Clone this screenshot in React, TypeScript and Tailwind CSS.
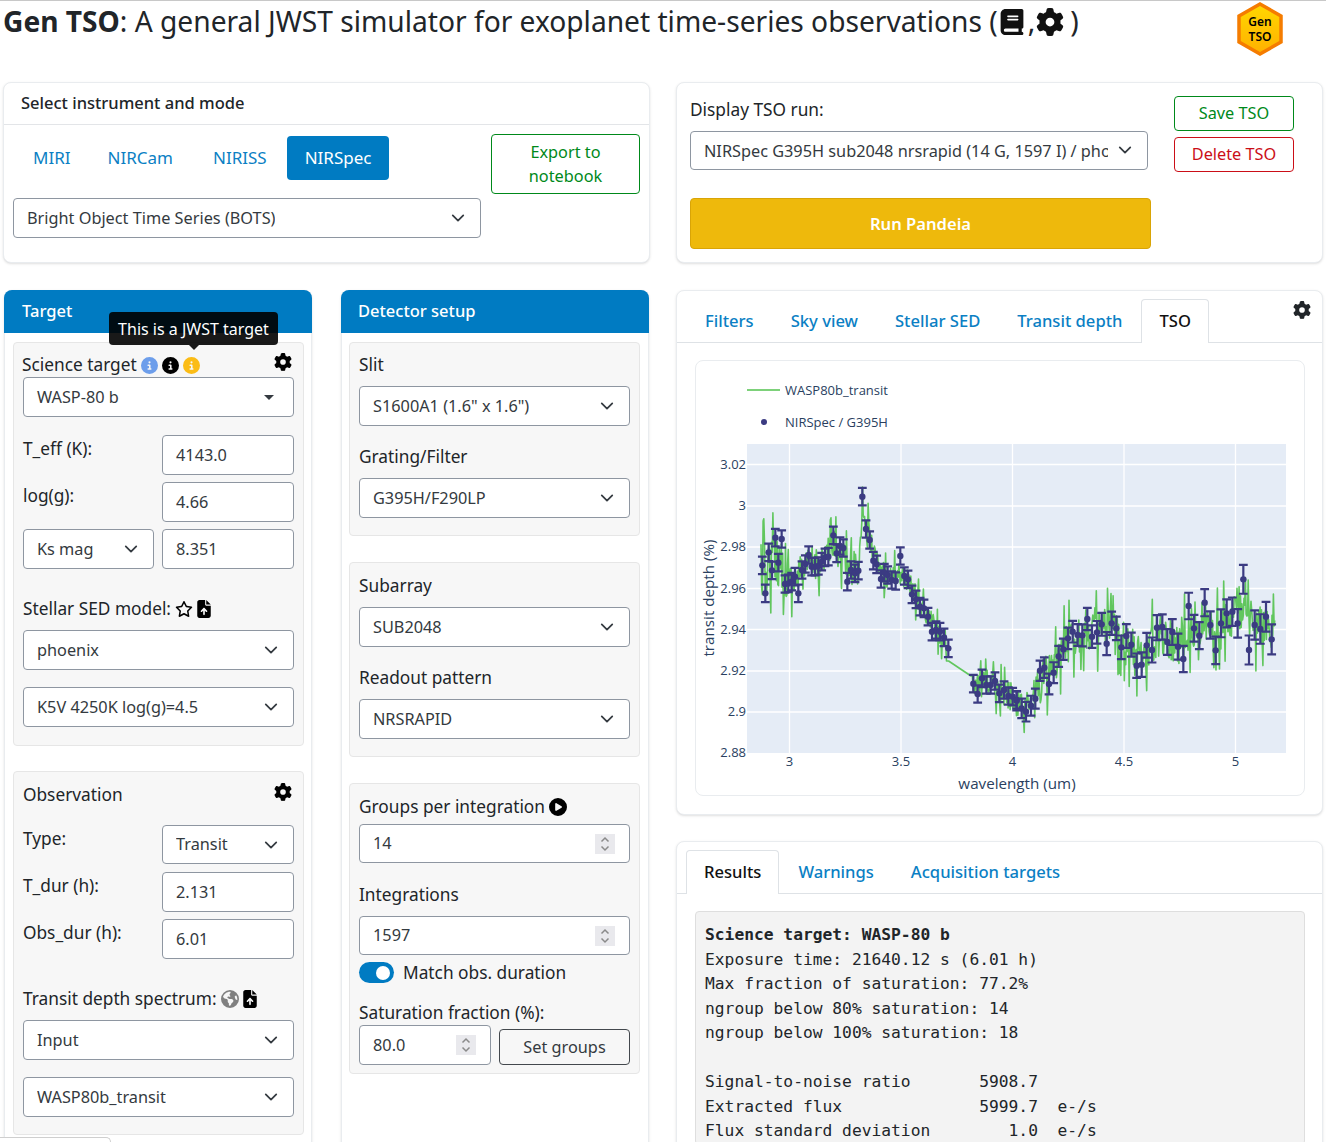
import type { ReactNode } from 'react';
import {
  FaBook,
  FaCircleInfo,
  FaCirclePlay,
  FaEarthAmericas,
  FaFileArrowUp,
  FaGear,
  FaRegStar,
} from 'react-icons/fa6';

const leftRaw = [
  [67, 376], [76, 460], [86, 337], [96, 391], [106, 293], [115, 368], [125, 297], [135, 432], [145, 430],
  [155, 425], [165, 410], [175, 460], [186, 390], [196, 372], [206, 345], [215, 380], [225, 380], [235, 378],
  [245, 365], [255, 352], [265, 350], [280, 286], [290, 340], [300, 318], [310, 324], [322, 425], [333, 390],
  [345, 400], [355, 392], [367, 170], [378, 267], [389, 300], [400, 362], [410, 373], [423, 417], [433, 398],
  [443, 405], [455, 420], [467, 423], [481, 348], [493, 408], [504, 418], [516, 463], [528, 478], [540, 500],
  [552, 505], [564, 530], [576, 575], [588, 570], [600, 575], [612, 592], [625, 625], [700, 731], [713, 762],
  [726, 715], [739, 735], [752, 735], [765, 723], [778, 760], [792, 750], [805, 768], [818, 770], [830, 780],
];
const rightRaw = [
  [20, 512], [35, 535], [48, 545], [63, 527], [76, 506], [90, 422], [103, 413], [117, 462], [131, 428], [146, 379],
  [160, 358], [174, 325], [188, 305], [203, 315], [217, 316], [232, 267], [246, 320], [261, 307], [275, 283],
  [290, 341], [305, 280], [319, 295], [334, 352], [349, 318], [364, 344], [380, 407], [395, 404], [410, 346],
  [426, 360], [441, 293], [457, 291], [472, 336], [487, 306], [504, 350], [520, 387], [536, 228], [552, 295],
  [568, 317], [584, 218], [601, 285], [617, 361], [633, 280], [650, 250], [667, 245], [683, 280], [700, 148],
  [717, 360], [734, 285], [751, 297], [768, 260], [785, 328],
];

const points = [
  ...leftRaw.map(([x, y]) => ({ x: 740 + x / 3, y: 440 + y / 3, e: 8.7 })),
  ...rightRaw.map(([x, y]) => ({ x: 1010 + x / 3, y: 530 + y / 3, e: 9.5 + (x / 785) * 5.5 })),
];

function noisePath() {
  let seed = 12345;
  const rand = () => {
    seed = (seed * 16807) % 2147483647;
    return seed / 2147483647;
  };
  const baseAt = (x: number) => {
    let i = 0;
    while (i < points.length - 2 && points[i + 1].x < x) i++;
    const a = points[i];
    const b = points[i + 1];
    const t = Math.max(0, Math.min(1, (x - a.x) / (b.x - a.x)));
    return a.y + (b.y - a.y) * t;
  };
  const smooth = (x: number) => {
    if (x > 856 && x < 868) return baseAt(x);
    return (baseAt(x - 7) + baseAt(x - 3.5) + baseAt(x) + baseAt(x + 3.5) + baseAt(x + 7)) / 5;
  };
  let d = '';
  for (let x = 761; x < 1275; x += 0.7) {
    if (x > 949 && x < 971) continue;
    let amp = 16;
    if (x < 790) amp = 30;
    else if (x < 870) amp = 20;
    else if (x < 949) amp = 14;
    else if (x < 1040) amp = 16;
    else amp = 25;
    const r = rand() - 0.5;
    const tail = Math.abs(r) > 0.45 ? 1.7 : 1;
    let y = smooth(x) + r * 2 * amp * tail;
    if (x > 946 && x <= 949) y = 661;
    if (x >= 971 && x < 973) y = 676;
    d += `${d ? 'L' : 'M'}${x.toFixed(1)} ${y.toFixed(1)}`;
  }
  return d;
}

const green = noisePath();
const xTicks: [number, string][] = [[789.5, '3'], [901, '3.5'], [1012.5, '4'], [1124, '4.5'], [1235.5, '5']];
const yTicks: [number, string][] = [
  [464.5, '3.02'], [506, '3'], [547, '2.98'], [588.5, '2.96'], [629.5, '2.94'], [671, '2.92'], [712, '2.9'], [753, '2.88'],
];

function Chart() {
  const axisText = 'fill-[#2a3f5f] text-[13px] font-["Open_Sans",sans-serif]';
  const titleText = 'fill-[#2a3f5f] text-[15.2px] font-["Open_Sans",sans-serif]';
  return (
    <svg className="block h-[434px] w-[608px]" viewBox="696 361 608 434">
      <rect x="747" y="444" width="539" height="309" fill="#e5ecf6" />
      {xTicks.map(([x]) => (
        <line key={x} x1={x} x2={x} y1="444" y2="753" stroke="#fff" strokeWidth="1.3" />
      ))}
      {yTicks.slice(0, -1).map(([y]) => (
        <line key={y} x1="747" x2="1286" y1={y} y2={y} stroke="#fff" strokeWidth="1.3" />
      ))}
      <path d={green} fill="none" stroke="#52c24e" strokeWidth="1.6" strokeOpacity="0.9" strokeLinejoin="round" />
      <g stroke="#3b3b82" strokeWidth="2.2" fill="#3b3b82">
        {points.map(p => (
          <g key={p.x}>
            <path
              d={`M${p.x} ${p.y - p.e}V${p.y + p.e}M${p.x - 4.4} ${p.y - p.e}h8.8M${p.x - 4.4} ${p.y + p.e}h8.8`}
              fill="none"
            />
            <circle cx={p.x} cy={p.y} r="3.2" stroke="none" />
          </g>
        ))}
      </g>
      {xTicks.map(([x, t]) => (
        <text key={t} x={x} y="766" textAnchor="middle" className={axisText}>{t}</text>
      ))}
      {yTicks.map(([y, t]) => (
        <text key={t} x="746" y={y + 4} textAnchor="end" className={axisText}>{t}</text>
      ))}
      <text x="1017" y="789" textAnchor="middle" className={titleText}>wavelength (um)</text>
      <text transform="translate(714 598) rotate(-90)" textAnchor="middle" className={titleText}>
        transit depth (%)
      </text>
      <line x1="747" x2="780" y1="390" y2="390" stroke="#52c24e" strokeWidth="1.5" />
      <text x="785" y="394.5" className={axisText}>WASP80b_transit</text>
      <circle cx="764" cy="422" r="3" fill="#3b3b82" />
      <text x="785" y="426.5" className={axisText}>NIRSpec / G395H</text>
    </svg>
  );
}

function Chevron() {
  return (
    <svg viewBox="0 0 16 16" className="h-[14px] w-[14px] shrink-0" fill="none" stroke="#343a40" strokeWidth="2" strokeLinecap="round" strokeLinejoin="round">
      <path d="m2 5 6 6 6-6" />
    </svg>
  );
}

function Select({ children, className = '' }: { children: ReactNode; className?: string }) {
  return (
    <div className={`flex h-10 items-center justify-between rounded-[4px] border border-[#8e96a1] bg-white pl-[13px] pr-[15px] text-[#343a40] ${className}`}>
      <span className="truncate">{children}</span>
      <Chevron />
    </div>
  );
}

function Input({ value, className = '' }: { value: string; className?: string }) {
  return (
    <div className={`flex h-10 items-center rounded-[4px] border border-[#8e96a1] bg-white pl-[13px] text-[#343a40] ${className}`}>
      {value}
    </div>
  );
}

function NumberInput({ value, className = '' }: { value: string; className?: string }) {
  return (
    <div className={`flex items-center justify-between rounded-[4px] border border-[#8e96a1] bg-white pl-[13px] pr-[14px] text-[#343a40] ${className}`}>
      {value}
      <span className="flex h-5 w-5 items-center justify-center bg-[#e9e9ed]">
        <svg viewBox="0 0 12 16" className="h-4 w-3" fill="none" stroke="#8a8a8a" strokeWidth="1.5">
          <path d="m2.5 5.5 3.5-3.5 3.5 3.5M2.5 10.5l3.5 3.5 3.5-3.5" />
        </svg>
      </span>
    </div>
  );
}

function Row({ label, children, className = '' }: { label: string; children: ReactNode; className?: string }) {
  return (
    <div className={`flex gap-2 ${className}`}>
      <div className="w-[131px] text-[17.3px] leading-[28px]">{label}</div>
      <div className="flex-1">{children}</div>
    </div>
  );
}

function Label({ children, className = '' }: { children: ReactNode; className?: string }) {
  return <div className={`flex h-[24px] items-center gap-[4px] text-[17.3px] ${className}`}>{children}</div>;
}

function Well({ children, className = '' }: { children: ReactNode; className?: string }) {
  return (
    <div className={`flex flex-col rounded-[4px] border border-[#e6e6e6] bg-[#f7f7f7] pl-[9px] pr-[9px] ${className}`}>
      {children}
    </div>
  );
}

function Panel({ title, headerClass = '', children }: { title: string; headerClass?: string; children: ReactNode }) {
  return (
    <div className="h-[900px] w-[308px] shrink-0 rounded-lg border border-[#e9ecef] bg-white shadow-sm">
      <div className={`-mx-px -mt-px flex h-[43px] items-center rounded-t-lg bg-[#007bc2] text-[16.5px] font-medium text-white ${headerClass}`}>
        {title}
      </div>
      {children}
    </div>
  );
}

function Tab({ children, active = false, className = '' }: { children: ReactNode; active?: boolean; className?: string }) {
  return active ? (
    <div className={`relative -mb-px flex h-[44px] items-center rounded-t-[4px] border border-b-0 border-[#dee2e6] bg-white px-[17px] text-[16.6px] font-medium text-[#111] ${className}`}>
      {children}
    </div>
  ) : (
    <div className={`flex h-[43px] items-center px-[18px] pt-[2px] text-[16.6px] font-medium text-[#0b7fc4] ${className}`}>{children}</div>
  );
}

export default function App() {
  return (
    <div className='relative h-[1142px] overflow-hidden border-t border-[#c8c8c8] bg-white font-["Noto_Sans",sans-serif] text-[16.3px] text-[#212529]'>
      <header className="flex h-[81px] items-start justify-between pl-[3px] pr-[42px]">
        <h1 className="flex h-[41px] items-center text-[28.17px] leading-[41px]">
          <span><b className="font-bold">Gen TSO</b>: A general JWST simulator for exoplanet time-series observations (</span>
          <FaBook className="ml-[2px] h-[26px] w-[24px] text-[#111]" />
          <span className="ml-[4px]">,</span>
          <FaGear className="ml-[1px] h-[28px] w-[28px] text-[#111]" />
          <span className="ml-[6px]">)</span>
        </h1>
        <svg viewBox="0 0 48 54" className="mt-[1px] h-[54px] w-[48px]">
          <defs>
            <linearGradient id="logoFill" x1="0" x2="0" y1="0" y2="1">
              <stop offset="0" stopColor="#ffd800" />
              <stop offset="1" stopColor="#ffb000" />
            </linearGradient>
          </defs>
          <path d="M24 2 45 14v26L24 52 3 40V14Z" fill="url(#logoFill)" stroke="#f57c00" strokeWidth="3.5" />
          <text x="24" y="24" textAnchor="middle" className="fill-black text-[12px] font-semibold">Gen</text>
          <text x="24" y="39" textAnchor="middle" className="fill-black text-[12px] font-semibold">TSO</text>
        </svg>
      </header>

      <div className="flex items-start">
        {/* left side */}
        <div className="w-[676px] shrink-0 pl-[3px]">
          <section className="flex h-[181px] w-[647px] flex-col rounded-lg border border-[#e9ecef] bg-white shadow-sm">
            <div className="flex h-[42px] items-center border-b border-[#e3e5e8] pl-[17px] text-[16.5px] font-medium">
              Select instrument and mode
            </div>
            <div className="flex pl-[9px]">
              <div className="w-[468px]">
                <div className="mt-[11px] flex h-[44px] items-center pl-[2px] text-[17px] text-[#0b7fc4]">
                  <span className="px-[18px]">MIRI</span>
                  <span className="ml-[1px] px-[18px]">NIRCam</span>
                  <span className="ml-[4px] px-[18px]">NIRISS</span>
                  <span className="ml-[2px] flex h-[44px] items-center rounded-[4px] bg-[#007bc2] px-[18px] text-white">NIRSpec</span>
                </div>
                <Select className="mt-[18px]">Bright Object Time Series (BOTS)</Select>
              </div>
              <div className="ml-[10px] mt-[9px] flex h-[60px] w-[149px] items-center justify-center rounded-[4px] border border-[#00891a] text-center leading-[24px] text-[#00891a]">
                Export to<br />notebook
              </div>
            </div>
          </section>

          <div className="mt-[27px] flex gap-[29px] pl-px">
            <div className="relative w-[308px] shrink-0">
              <Panel title="Target" headerClass="pl-[18px]">
                <div className="pl-[8px] pr-[7px] pt-[9px]">
                  <Well className="h-[404px]">
                    <div className="mt-[10px] flex h-[24px] items-center justify-between pr-[2px]">
                      <span className="-ml-px flex items-center gap-[4px] text-[17.3px]">
                        Science target
                        <FaCircleInfo className="h-[17px] w-[17px] text-[#6d9eeb]" />
                        <FaCircleInfo className="h-[17px] w-[17px] text-black" />
                        <FaCircleInfo className="h-[17px] w-[17px] text-[#fbbc16]" />
                      </span>
                      <FaGear className="-mt-[7px] h-[18px] w-[18px] text-black" />
                    </div>
                    <div className="flex h-10 items-center justify-between rounded-[4px] border border-[#8e96a1] bg-white pl-[13px] pr-[19px] text-[#343a40]">
                      WASP-80 b
                      <span className="h-0 w-0 border-x-[5px] border-t-[5px] border-x-transparent border-t-[#343a40]" />
                    </div>
                    <Row label="T_eff (K):" className="mt-[18px]"><Input value="4143.0" /></Row>
                    <Row label="log(g):" className="mt-[7px]"><Input value="4.66" /></Row>
                    <div className="mt-[7px] flex gap-2">
                      <Select className="w-[131px]">Ks mag</Select>
                      <Input value="8.351" className="flex-1" />
                    </div>
                    <Label className="mt-[28px]">
                      Stellar SED model:
                      <FaRegStar className="h-[18px] w-[18px] text-black" />
                      <FaFileArrowUp className="h-[18px] w-[14px] text-black" />
                    </Label>
                    <Select className="mt-[9px]">phoenix</Select>
                    <Select className="mt-[17px]">K5V 4250K log(g)=4.5</Select>
                  </Well>
                  <Well className="mt-[25px] h-[364px]">
                    <div className="mt-[11px] flex h-[24px] items-center justify-between pr-[2px] text-[17.3px]">
                      Observation
                      <FaGear className="-mt-[7px] h-[18px] w-[18px] text-black" />
                    </div>
                    <Row label="Type:" className="mt-[18px]"><Select className="h-[39px]">Transit</Select></Row>
                    <Row label="T_dur (h):" className="mt-[8px]"><Input value="2.131" /></Row>
                    <Row label="Obs_dur (h):" className="mt-[7px]"><Input value="6.01" /></Row>
                    <Label className="mt-[28px]">
                      Transit depth spectrum:
                      <FaEarthAmericas className="h-[18px] w-[18px] text-[#808080]" />
                      <FaFileArrowUp className="h-[18px] w-[14px] text-black" />
                    </Label>
                    <Select className="mt-[9px]">Input</Select>
                    <Select className="mt-[17px]">WASP80b_transit</Select>
                  </Well>
                </div>
              </Panel>
              <div className="absolute left-[105px] top-[22px] flex h-[33px] w-[169px] items-center justify-center rounded-[4px] bg-black/90 text-[16px] text-white">
                This is a JWST target
                <span className="absolute left-[80px] top-[33px] h-0 w-0 border-x-[5px] border-t-[5px] border-x-transparent border-t-black/90" />
              </div>
            </div>

            <Panel title="Detector setup" headerClass="pl-[17px]">
              <div className="pl-[7px] pr-[8px] pt-[9px]">
                <Well className="h-[194px]">
                  <Label className="mt-[10px]">Slit</Label>
                  <Select className="mt-[9px]">S1600A1 (1.6" x 1.6")</Select>
                  <Label className="mt-[19px]">Grating/Filter</Label>
                  <Select className="mt-[9px]">G395H/F290LP</Select>
                </Well>
                <Well className="mt-[26px] h-[195px]">
                  <Label className="mt-[11px]">Subarray</Label>
                  <Select className="mt-[9px]">SUB2048</Select>
                  <Label className="mt-[19px]">Readout pattern</Label>
                  <Select className="mt-[9px]">NRSRAPID</Select>
                </Well>
                <Well className="mt-[26px] h-[291px]">
                  <Label className="mt-[11px]">
                    Groups per integration
                    <FaCirclePlay className="h-[18px] w-[18px] text-black" />
                  </Label>
                  <NumberInput value="14" className="mt-[5px] h-[39px]" />
                  <Label className="mt-[20px]">Integrations</Label>
                  <NumberInput value="1597" className="mt-[9px] h-[39px]" />
                  <div className="mt-[7px] flex h-[21px] items-center gap-[9px] text-[17.3px]">
                    <span className="flex h-[21px] w-[35px] items-center justify-end rounded-full bg-[#007bc2] pr-[4px]">
                      <span className="h-[14px] w-[14px] rounded-full bg-white" />
                    </span>
                    Match obs. duration
                  </div>
                  <Label className="mt-[18px]">Saturation fraction (%):</Label>
                  <div className="flex items-end gap-2">
                    <NumberInput value="80.0" className="h-10 w-[132px]" />
                    <div className="flex h-[36px] flex-1 items-center justify-center rounded-[4px] border border-[#43484d] text-[#343a40]">
                      Set groups
                    </div>
                  </div>
                </Well>
              </div>
            </Panel>
          </div>
        </div>

        {/* right side */}
        <div className="w-[647px] shrink-0">
          <section className="flex h-[181px] rounded-lg border border-[#e9ecef] bg-white shadow-sm">
            <div className="ml-[13px] w-[461px] shrink-0">
              <Label className="mt-[15px]">Display TSO run:</Label>
              <div className="mt-[9px] flex h-[39px] w-[458px] items-center rounded-[4px] border border-[#8e96a1] pl-[13px] pr-[15px] pt-[1px] text-[#343a40]">
                <span className="w-[404px] overflow-hidden whitespace-nowrap">NIRSpec G395H sub2048 nrsrapid (14 G, 1597 I) / phoenix</span>
                <span className="-mt-[3px] ml-auto"><Chevron /></span>
              </div>
              <div className="mt-[28px] flex h-[51px] items-center justify-center rounded-[4px] border border-[#d9a406] bg-[#eeb90c] pt-[1px] text-[16.6px] font-semibold text-white">
                Run Pandeia
              </div>
            </div>
            <div className="ml-[23px] mt-[13px] w-[120px]">
              <div className="flex h-[35px] items-center justify-center rounded-[4px] border border-[#00891a] text-[#00891a]">Save TSO</div>
              <div className="mt-[6px] flex h-[35px] items-center justify-center rounded-[4px] border border-[#cb0e17] text-[#cb0e17]">Delete TSO</div>
            </div>
          </section>

          <section className="relative mt-[27px] h-[525px] rounded-lg border border-[#e9ecef] bg-white shadow-sm">
            <div className="flex h-[52px] items-end border-b border-[#dee2e6] pl-[10px]">
              <Tab>Filters</Tab>
              <Tab className="ml-px">Sky view</Tab>
              <Tab className="ml-px">Stellar SED</Tab>
              <Tab className="ml-px">Transit depth</Tab>
              <Tab active className="ml-px">TSO</Tab>
            </div>
            <FaGear className="absolute right-[11px] top-[10px] h-[18px] w-[18px] text-[#212529]" />
            <div className="ml-[18px] mt-[17px] w-[610px] rounded-lg border border-[#e9ecef]">
              <Chart />
            </div>
          </section>

          <section className="mt-[26px] h-[400px] rounded-lg border border-[#e9ecef] bg-white shadow-sm">
            <div className="flex h-[52px] items-end border-b border-[#dee2e6] pl-[9px]">
              <Tab active>Results</Tab>
              <Tab className="ml-px">Warnings</Tab>
              <Tab className="ml-px">Acquisition targets</Tab>
            </div>
            <pre className='ml-[18px] mt-[17px] w-[610px] rounded-[4px] border border-[#dedede] bg-[#f3f3f3] px-[9px] pt-[11px] font-["DejaVu_Sans_Mono",monospace] text-[16.28px] leading-[24.5px] text-[#212529]'>
              <b>Science target: WASP-80 b</b>{'\n'}
              {'Exposure time: 21640.12 s (6.01 h)\n'}
              {'Max fraction of saturation: 77.2%\n'}
              {'ngroup below 80% saturation: 14\n'}
              {'ngroup below 100% saturation: 18\n\n'}
              {'Signal-to-noise ratio       5908.7\n'}
              {'Extracted flux              5999.7  e-/s\n'}
              {'Flux standard deviation        1.0  e-/s\n'}
            </pre>
          </section>
        </div>
      </div>

      <div className="absolute bottom-0 left-0 h-[5px] w-[111px] rounded-tr-[6px] border-r border-t border-[#cfcfcf] bg-white" />
    </div>
  );
}
